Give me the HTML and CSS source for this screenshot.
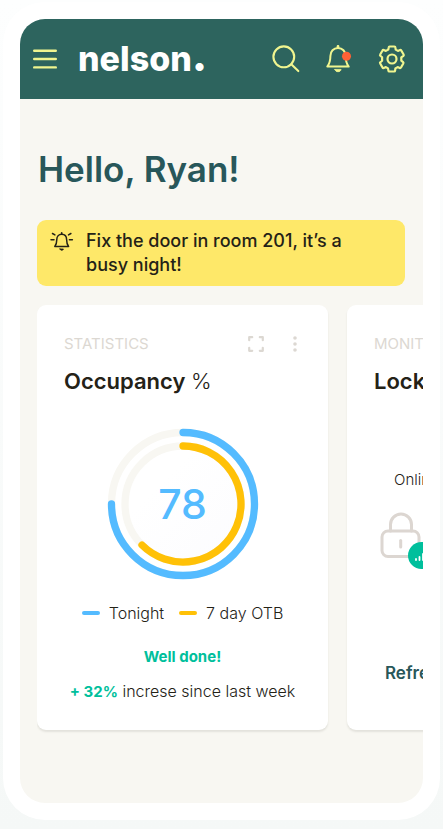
FILE: index.html
```html
<!DOCTYPE html>
<html lang="en">
<head>
<meta charset="utf-8">
<meta name="viewport" content="width=device-width, initial-scale=1">
<title>nelson.</title>
<link rel="stylesheet" href="styles.css">
</head>
<body>
<div class="frame">
  <div class="screen">
    <header class="topbar">
      <button class="icon-button" type="button" aria-label="Menu">
        <svg width="24" height="20" viewBox="0 0 24 20" fill="none" stroke="currentColor" stroke-width="2.4" stroke-linecap="round"><path d="M1.2 1.7h21.6M1.2 10h21.6M1.2 18.4h21.6"/></svg>
      </button>
      <a class="logo" href="#">nelson<span class="logo-dot">.</span></a>
      <nav class="actions" aria-label="Tools">
        <button class="icon-button" type="button" aria-label="Search">
          <svg width="28" height="28" viewBox="0 0 28 28" fill="none" stroke="currentColor" stroke-width="2.1" stroke-linecap="round"><circle cx="11.8" cy="11.8" r="10.4"/><path d="M19.3 19.3l7 6.8"/></svg>
        </button>
        <button class="icon-button" type="button" aria-label="Notifications">
          <svg width="28" height="28" viewBox="0 0 28 28" fill="none" stroke="currentColor" stroke-width="2" stroke-linejoin="round" stroke-linecap="round"><path d="M2.300 21.600c2.400-3.200 3.100-5.400 3.100-10.600C5.400 6.300 8.500 3 13 3s7.600 3.300 7.600 8c0 5.200.7 7.400 3.100 10.600z"/><path d="M13 1.200v1.500" stroke-width="2.600"/><path d="M9.900 24.400h6.200c-.4 1.600-1.500 2.300-3.100 2.300s-2.700-.7-3.100-2.300z" fill="currentColor" stroke-width=".8"/><circle cx="21.500" cy="11.200" r="4.500" fill="#ff6135" stroke="none"/></svg>
        </button>
        <button class="icon-button" type="button" aria-label="Settings">
          <svg width="28" height="28" viewBox="0 0 28 28" fill="none" stroke="currentColor" stroke-width="2.200" stroke-linejoin="round"><circle cx="14" cy="14" r="4.500"/><path d="M11.600 1.500h4.800q.9 0 1 .9l.3 2.200 2.200 1.300 2.100-.9q.8-.3 1.300.5l2.300 4q.4.800-.2 1.300L23.300 12.300v3.400l1.800 1.500q.6.500.2 1.300l-2.300 4q-.5.800-1.300.5l-2.100-.9-2.200 1.300-.3 2.200q-.1.900-1 .9h-4.800q-.8 0-.9-.9l-.4-2.200-2.100-1.300-2.100.9q-.9.300-1.300-.5l-2.300-4q-.5-.8.200-1.300l1.700-1.500v-3.400l-1.700-1.500q-.7-.500-.2-1.300l2.300-4q.400-.8 1.300-.5l2.100.9L10.300 4.600l.4-2.200q.1-.9.900-.9z"/></svg>
        </button>
      </nav>
    </header>

    <main class="content">
      <h1 class="greeting">Hello, Ryan!</h1>

      <div class="notice" role="status">
        <svg class="notice-icon" width="24" height="20" viewBox="0 0 24 20" fill="none" stroke="currentColor" stroke-width="1.500" stroke-linecap="round" stroke-linejoin="round"><path d="M4.800 14.500c1.500-1.900 2-3.500 2-7 0-3.200 1.900-5.300 4.900-5.300s4.900 2.100 4.900 5.300c0 3.500.5 5.100 2 7z"/><path d="M11.700.9v1" stroke-width="1.700"/><path d="M10 17h3.400c-.3 1-.9 1.300-1.700 1.300S10.300 18 10 17z" fill="currentColor" stroke-width=".8"/><path d="M2.500 1.500l2.400 1.400M1 7.700h3M20.900 1.500l-2.400 1.400M22.400 7.700h-3"/></svg>
        <p class="notice-text">Fix the door in room 201, it’s a busy night!</p>
      </div>

      <div class="cards">
        <section class="card">
          <div class="card-head">
            <p class="eyebrow">STATISTICS</p>
            <div class="card-tools">
              <button class="icon-button" type="button" aria-label="Expand">
                <svg width="16" height="16" viewBox="0 0 16 16" fill="none" stroke="currentColor" stroke-width="2.200" stroke-linecap="round" stroke-linejoin="round"><path d="M1.200 4.200V1.200h3M11.800 1.200h3v3M14.800 11.800v3h-3M4.200 14.800H1.200v-3"/></svg>
              </button>
              <button class="icon-button" type="button" aria-label="More options">
                <svg width="4" height="16" viewBox="0 0 4 16" fill="currentColor"><circle cx="2" cy="2" r="1.800"/><circle cx="2" cy="8" r="1.800"/><circle cx="2" cy="14" r="1.800"/></svg>
              </button>
            </div>
          </div>
          <h2 class="card-title">Occupancy <span class="unit">%</span></h2>
          <div class="gauge">
            <svg width="152" height="152" viewBox="0 0 152 152" fill="none" stroke-width="7.300" stroke-linecap="round">
              <defs><linearGradient id="dial" x1="0" y1="0" x2="1" y2="1"><stop offset=".3" stop-color="#fff"/><stop offset="1" stop-color="#fcfcfe"/></linearGradient></defs>
              <circle cx="76" cy="76" r="55" fill="url(#dial)"/>
              <circle cx="76" cy="76" r="71.500" stroke="#f8f7f2"/>
              <circle cx="76" cy="76" r="58" stroke="#f8f7f2"/>
              <path d="M76 4.500A71.500 71.500 0 1 1 4.500 76" stroke="#54bbff"/>
              <path d="M76 18A58 58 0 1 1 35 117" stroke="#ffc107"/>
            </svg>
            <span class="gauge-value">78</span>
          </div>
          <ul class="legend">
            <li class="legend-item"><span class="swatch swatch-blue"></span>Tonight</li>
            <li class="legend-item"><span class="swatch swatch-gold"></span>7 day OTB</li>
          </ul>
          <p class="praise">Well done!</p>
          <p class="trend"><strong class="gain">+ 32%</strong> increse since last week</p>
        </section>

        <section class="card">
          <div class="card-head"><p class="eyebrow">MONITORING</p></div>
          <h2 class="card-title">Locks</h2>
          <div class="lock-status">
            <p class="lock-label">Online</p>
            <svg width="56" height="58" viewBox="0 0 56 58" fill="none" stroke="#dcd6d1" stroke-width="3" stroke-linecap="round"><path d="M10.500 19V12.500a10.500 10.500 0 0 1 21 0V19"/><rect x="2" y="19" width="37" height="25.500" rx="6"/><path d="M20.700 28.500v6.500"/><circle cx="41.500" cy="43.500" r="13.500" fill="#00bf9c" stroke="none"/><path d="M36 47v1M39.500 45v3M43 42v6M46.500 39v9" stroke="#fff" stroke-width="1.800"/></svg>
          </div>
          <button class="refresh" type="button">Refresh</button>
        </section>
      </div>
    </main>
  </div>
</div>
</body>
</html>
```
FILE: styles.css
```css
* {
  box-sizing: border-box;
}

body {
  margin: 0;
  padding: 2px 3px 9px;
  background: linear-gradient(#fdfefe, #f5f8f7);
  color: #242217;
  font-family: Inter, "Liberation Sans", sans-serif;
  font-size: 15px;
  line-height: 24px;
}

h1, h2, p, ul {
  margin: 0;
  padding: 0;
}

.frame {
  padding: 17px;
  border-radius: 42px;
  background: #fff;
}

.screen {
  overflow: hidden;
  border-radius: 25px;
  background: #f8f7f2;
}

.icon-button {
  display: flex;
  padding: 0;
  border: 0;
  background: none;
  color: inherit;
}

.topbar {
  display: flex;
  align-items: center;
  height: 80px;
  padding: 0 17px 0 13px;
  background: #2d645e;
  color: #f0f58f;
}

.logo {
  margin-left: 21px;
  color: #fff;
  font-size: 34px;
  font-weight: 800;
  line-height: 40px;
  text-decoration: none;
}

.logo-dot {
  font-size: 44px;
  line-height: 0;
}

.actions {
  display: flex;
  gap: 25px;
  margin-left: auto;
}

.content {
  padding: 48px 18px 68px;
}

.greeting {
  color: #28575a;
  font-size: 35px;
  font-weight: 600;
  line-height: 44px;
}

.notice {
  display: flex;
  gap: 12px;
  margin: 29px 0 0 -1px;
  padding: 9px 36px 9px 13px;
  border-radius: 9px;
  background: #fee869;
}

.notice-icon {
  flex: none;
  margin-top: 3px;
}

.notice-text {
  font-size: 18px;
  font-weight: 500;
}

.cards {
  display: flex;
  gap: 19px;
  margin: 0 -18px 0 -1px;
  padding: 19px 0 5px;
  overflow-x: auto;
  scrollbar-width: none;
}

.card {
  flex: 0 0 291px;
  padding: 27px 27px 26px;
  border-radius: 9px;
  background: #fff;
  box-shadow: 0 2px 2px #e3e2dc;
}

.card-head {
  display: flex;
  align-items: center;
  justify-content: space-between;
  color: #dcd8d2;
}

.card-tools {
  display: flex;
  gap: 29px;
  margin-right: 4px;
}

.card-title {
  margin-top: 11px;
  font-size: 22px;
  font-weight: 600;
  line-height: 28px;
}

.unit {
  font-weight: 300;
}

.gauge {
  display: grid;
  place-items: center;
  margin-top: 33px;
}

.gauge > * {
  grid-area: 1 / 1;
}

.gauge-value {
  color: #54bbff;
  font-size: 41px;
  font-weight: 500;
  line-height: 48px;
}

.legend {
  display: flex;
  justify-content: center;
  gap: 15px;
  margin-top: 21px;
  font-size: 16px;
  font-weight: 300;
  list-style: none;
}

.legend-item {
  display: flex;
  align-items: center;
  gap: 9px;
}

.swatch {
  width: 18px;
  height: 4px;
  border-radius: 2px;
}

.swatch-blue {
  background: #54bbff;
}

.swatch-gold {
  background: #ffc107;
}

.praise {
  margin-top: 20px;
  color: #00bf9c;
  font-weight: 700;
  text-align: center;
}

.trend {
  margin: 10px -12px 0;
  font-size: 16px;
  font-weight: 300;
  text-align: center;
}

.gain {
  color: #00bf9c;
  font-size: 15px;
  font-weight: 700;
}

.lock-status {
  display: flex;
  flex-direction: column;
  gap: 20px;
  margin: 73px 0 0 6px;
}

.lock-label {
  margin-left: 14px;
  font-weight: 300;
}

.refresh {
  margin: 91px 0 0 11px;
  padding: 0;
  border: 0;
  background: none;
  color: #28575a;
  font: 600 17px/24px Inter, "Liberation Sans", sans-serif;
}
```
